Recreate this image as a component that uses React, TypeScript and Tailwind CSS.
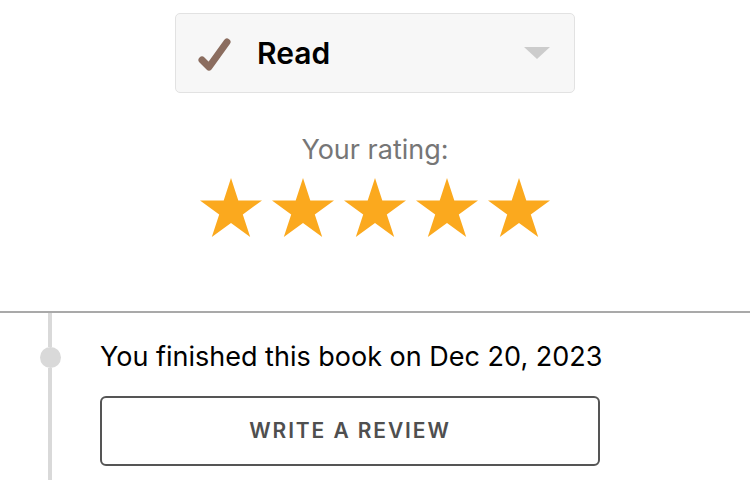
export default function App() {
  return (
    <main
      className="h-[480px] w-[750px] overflow-hidden bg-white"
      style={{ fontFamily: 'Inter, "Liberation Sans", sans-serif' }}
    >
      <section className="flex flex-col items-center pt-[13px]">
        <div className="flex h-[80px] w-[400px] items-center rounded-[5px] border border-[#e2e2e2] bg-[#f7f7f7] pl-[20px] pr-[24px]">
          <svg width="38" height="38" viewBox="0 0 38 38">
            <path
              d="M6 26 L13 33 L31 8"
              fill="none"
              stroke="#8b6d5f"
              strokeWidth="7"
              strokeLinecap="round"
              strokeLinejoin="round"
            />
          </svg>
          <span className="ml-[23px] text-[30px] font-semibold text-black">Read</span>
          <svg className="ml-auto" width="26" height="14" viewBox="0 0 26 14">
            <path d="M0 1 L26 1 L13 13 Z" fill="#cccccc" />
          </svg>
        </div>

        <p className="mt-[40px] text-[27px] leading-[34px] text-[#767676]">Your rating:</p>

        <div className="mt-[11px] flex gap-[10px]">
          {[0, 1, 2, 3, 4].map((i) => (
            <svg key={i} width="62" height="59" viewBox="0 0 62 59">
              <path
                d="M31 0 L38.3 22.5 L62 22.5 L42.8 36.4 L50.2 59 L31 45 L11.8 59 L19.2 36.4 L0 22.5 L23.7 22.5 Z"
                fill="#fba91e"
              />
            </svg>
          ))}
        </div>
      </section>

      <section className="mt-[74px] flex border-t-2 border-[#a9a9a9]">
        <div className="flex w-[100px] shrink-0 flex-col items-center">
          <div className="h-[34px] w-[4px] bg-[#d9d9d9]" />
          <div className="h-[21px] w-[21px] rounded-full bg-[#d9d9d9]" />
          <div className="h-[120px] w-[4px] bg-[#d9d9d9]" />
        </div>
        <div className="pt-[27px]">
          <p className="text-[27px] leading-[34px] text-black">
            You finished this book on Dec 20, 2023
          </p>
          <button className="mt-[22px] flex h-[70px] w-[500px] items-center justify-center rounded-[6px] border-2 border-[#555555] bg-white text-[21px] font-semibold tracking-[0.09em] text-[#4f4f4f]">
            WRITE A REVIEW
          </button>
        </div>
      </section>
    </main>
  )
}
